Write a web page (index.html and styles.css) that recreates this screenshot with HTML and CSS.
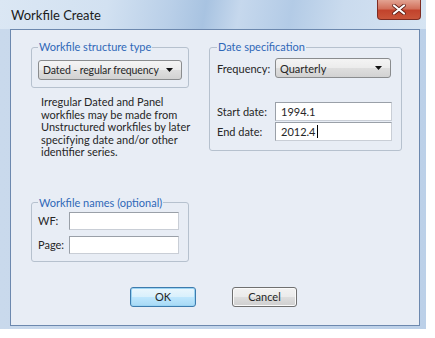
FILE: index.html
```html
<!DOCTYPE html>
<html lang="en">
<head>
  <meta charset="UTF-8">
  <title>Workfile Create</title>
  <link rel="stylesheet" href="styles.css">
</head>
<body>
  <div class="window">
    <div class="titlebar">
      <span class="title">Workfile Create</span>
      <span class="close">
        <svg width="14" height="11" viewBox="0 0 14 11"><path d="M2 1.5 L12 9.5 M12 1.5 L2 9.5" stroke="#5a1a12" stroke-width="3.6" stroke-linecap="round"/><path d="M2 1.5 L12 9.5 M12 1.5 L2 9.5" stroke="#fff" stroke-width="2.2" stroke-linecap="round"/></svg>
      </span>
    </div>

    <div class="client">
      <div class="columns">
        <div class="col-left">
          <fieldset class="group structure">
            <legend>Workfile structure type</legend>
            <div class="select wide">
              <span>Dated - regular frequency</span>
              <svg class="arrow" width="7" height="4" viewBox="0 0 7 4"><path d="M0 0 H7 L3.5 4 Z" fill="#111"/></svg>
            </div>
          </fieldset>

          <p class="note">Irregular Dated and Panel<br>workfiles may be made from<br>Unstructured workfiles by later<br>specifying date and/or other<br>identifier series.</p>

          <fieldset class="group names">
            <legend>Workfile names (optional)</legend>
            <div class="row">
              <label>WF:</label>
              <div class="field small"></div>
            </div>
            <div class="row">
              <label>Page:</label>
              <div class="field small"></div>
            </div>
          </fieldset>
        </div>

        <fieldset class="group dates">
          <legend>Date specification</legend>
          <div class="row">
            <label>Frequency:</label>
            <div class="select freq">
              <span>Quarterly</span>
              <svg class="arrow" width="7" height="4" viewBox="0 0 7 4"><path d="M0 0 H7 L3.5 4 Z" fill="#111"/></svg>
            </div>
          </div>
          <div class="row start">
            <label>Start date:</label>
            <div class="field">1994.1</div>
          </div>
          <div class="row">
            <label>End date:</label>
            <div class="field">2012.4<span class="caret"></span></div>
          </div>
        </fieldset>
      </div>

      <div class="buttons">
        <button class="btn default">OK</button>
        <button class="btn cancel">Cancel</button>
      </div>
    </div>
  </div>
</body>
</html>
```

FILE: styles.css
```css
body { margin: 0; background: #fff; font-family: Lato, "Liberation Sans", sans-serif; font-size: 11px; color: #262626; white-space: nowrap; }

.window { width: 426px; height: 329px; display: flex; flex-direction: column; background: linear-gradient(90deg, #c9d9ec, #c1d4ea 60%, #bcd0e8); }

.titlebar { height: 29px; display: flex; align-items: flex-start; padding-left: 11px;
  background: linear-gradient(100deg, #dbe7f4 0%, #d2e1f1 25%, #b9cfe8 40%, #a8c3e1 48%, #c6d8ed 56%, #b3cbe6 68%, #cadbee 80%, #d6e4f2 100%); }
.title { font-size: 13px; line-height: 30px; color: #1b1b1b; }
.close { margin-left: auto; margin-right: 5px; width: 44px; height: 20px; box-sizing: border-box; display: flex; align-items: center; justify-content: center;
  border: 1px solid #7e2c22; border-top: none; border-radius: 0 0 4px 4px;
  background: linear-gradient(#e3a392 0%, #d2715c 45%, #c2432c 55%, #c9553a 100%); }

.client { height: 297px; box-sizing: border-box; margin: 0 6px 0 10px; border: 1px solid #6c88ae; background: #e8edf5; padding: 10px 0 0 20px; }

.columns { display: flex; gap: 20px; align-items: flex-start; }
.col-left { width: 158px; }

.group { margin: 0; min-width: 0; border: 1px solid #b6c1ce; border-radius: 3px; padding: 6px 6px 7px 6px; }
.group legend { padding: 0 1px; line-height: 14px; color: #2f68b8; }

.select { height: 20px; box-sizing: border-box; display: flex; align-items: center; justify-content: space-between; padding: 0 8px 0 4px;
  border: 1px solid #8a8c8e; border-radius: 3px; background: linear-gradient(#f4f4f4 0%, #ececec 48%, #dedede 52%, #d2d2d2 100%); }
.select.wide { width: 144px; font-size: 10.5px; letter-spacing: -0.1px; }
.select.freq { width: 116px; }

.note { margin: 8px 0 0 10px; line-height: 12.5px; }

.row { display: flex; align-items: center; }
.row label { flex: none; }

.names { margin-top: 37px; padding-top: 2px; }
.names .row + .row { margin-top: 6px; }
.names label { width: 31px; }
.field { height: 19px; width: 117px; box-sizing: border-box; background: #fff; border: 1px solid #c9ced6; border-top-color: #9aa0a8; border-left-color: #9aa0a8;
  padding-left: 5px; display: flex; align-items: center; }
.field.small { height: 18px; width: 110px; }
.caret { width: 1px; height: 13px; background: #000; margin-left: 1px; }

.dates { width: 193px; box-sizing: border-box; padding: 4px 7px 9px 7px; }
.dates label { width: 58px; }
.dates .start { margin-top: 24px; }
.dates .start + .row { margin-top: 1px; }

.buttons { display: flex; gap: 36px; margin: 25px 0 0 99px; }
.btn { height: 20px; font-family: inherit; font-size: 11px; color: #262626; border-radius: 3px; padding: 0; }
.btn.default { width: 66px; border: 1px solid #3d7bad; background: linear-gradient(#eaf6fd 0%, #d9f0fc 48%, #bee6fd 52%, #a7d9f5 100%); box-shadow: inset 0 0 0 1px #9bd4f3; }
.btn.cancel { width: 65px; border: 1px solid #707070; background: linear-gradient(#f2f2f2 0%, #ebebeb 48%, #dddddd 52%, #cfcfcf 100%); box-shadow: inset 0 0 0 1px #fafafa; }
```
